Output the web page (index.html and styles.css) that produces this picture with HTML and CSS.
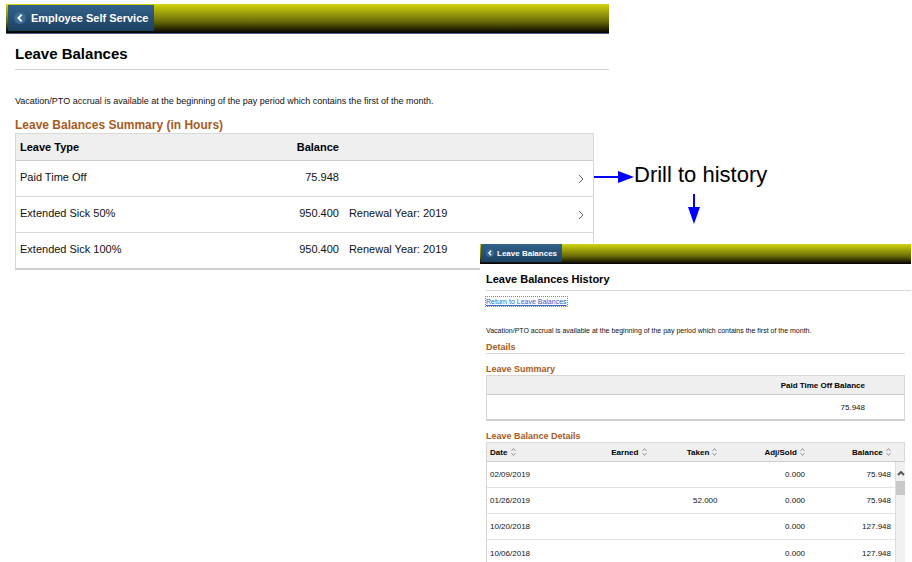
FILE: index.html
```
<!DOCTYPE html>
<html lang="en">
<head>
  <meta charset="UTF-8" />
  <meta name="viewport" content="width=device-width, initial-scale=1.0" />
  <title>Leave Balances</title>
  <link rel="stylesheet" href="styles.css">
</head>
<body>

  <div class="stage">

    <!-- Leave Balances -->
    <main class="summary">
      <header class="toolbar">
        <button type="button" class="back">
          <svg class="back-icon" viewBox="0 0 12 12" aria-hidden="true"><circle cx="6" cy="6" r="6" /><path d="M7.6 2.6 4.4 6l3.2 3.4" /></svg>
          Employee Self Service
        </button>
      </header>
      <h1>Leave Balances</h1>
      <p class="notice">Vacation/PTO accrual is available at the beginning of the pay period which contains the first of the month.</p>
      <h2>Leave Balances Summary (in Hours)</h2>
      <table class="grid balances">
        <thead>
          <tr>
            <th class="type">Leave Type</th>
            <th class="num">Balance</th>
            <th class="renewal"></th>
            <th class="open"></th>
          </tr>
        </thead>
        <tbody>
          <tr>
            <td>Paid Time Off</td>
            <td class="num">75.948</td>
            <td></td>
            <td><button type="button" class="drill" aria-label="Paid Time Off history"><svg viewBox="0 0 6 10"><path d="M1 1l4 4-4 4" /></svg></button></td>
          </tr>
          <tr>
            <td>Extended Sick 50%</td>
            <td class="num">950.400</td>
            <td>Renewal Year: 2019</td>
            <td><button type="button" class="drill" aria-label="Extended Sick 50% history"><svg viewBox="0 0 6 10"><path d="M1 1l4 4-4 4" /></svg></button></td>
          </tr>
          <tr>
            <td>Extended Sick 100%</td>
            <td class="num">950.400</td>
            <td>Renewal Year: 2019</td>
            <td></td>
          </tr>
        </tbody>
      </table>
    </main>

    <!-- Callout -->
    <div class="callout">
      <svg class="arrow-right" viewBox="0 0 40 12" aria-hidden="true"><path class="line" d="M0 6h26" /><path class="head" d="M24 0l16 6-16 6z" /></svg>
      <span>Drill to history</span>
      <svg class="arrow-down" viewBox="0 0 12 30" aria-hidden="true"><path class="line" d="M6 0v16" /><path class="head" d="M0 13l6 17 6-17z" /></svg>
    </div>

    <!-- Leave Balances History -->
    <section class="history">
      <header class="toolbar">
        <button type="button" class="back">
          <svg class="back-icon" viewBox="0 0 12 12" aria-hidden="true"><circle cx="6" cy="6" r="6" /><path d="M7.6 2.6 4.4 6l3.2 3.4" /></svg>
          Leave Balances
        </button>
      </header>
      <h1>Leave Balances History</h1>
      <div class="content">
        <a class="return" href="#">Return to Leave Balances</a>
        <p class="notice">Vacation/PTO accrual is available at the beginning of the pay period which contains the first of the month.</p>
        <h2 class="ruled">Details</h2>

        <h2>Leave Summary</h2>
        <table class="grid pto">
          <thead>
            <tr><th class="num">Paid Time Off Balance</th></tr>
          </thead>
          <tbody>
            <tr><td class="num">75.948</td></tr>
          </tbody>
        </table>

        <h2>Leave Balance Details</h2>
        <div class="scroller">
          <table class="grid details">
            <thead>
              <tr>
                <th class="date">Date <svg class="sort" viewBox="0 0 5 8"><path d="M.5 3l2-2.500 2 2.500M.5 5l2 2.500 2-2.500" /></svg></th>
                <th class="num earned">Earned <svg class="sort" viewBox="0 0 5 8"><path d="M.5 3l2-2.500 2 2.500M.5 5l2 2.500 2-2.500" /></svg></th>
                <th class="num taken">Taken <svg class="sort" viewBox="0 0 5 8"><path d="M.5 3l2-2.500 2 2.500M.5 5l2 2.500 2-2.500" /></svg></th>
                <th class="num sold">Adj/Sold <svg class="sort" viewBox="0 0 5 8"><path d="M.5 3l2-2.500 2 2.500M.5 5l2 2.500 2-2.500" /></svg></th>
                <th class="num balance">Balance <svg class="sort" viewBox="0 0 5 8"><path d="M.5 3l2-2.500 2 2.500M.5 5l2 2.500 2-2.500" /></svg></th>
              </tr>
            </thead>
            <tbody>
              <tr><td>02/09/2019</td><td></td><td></td><td class="num">0.000</td><td class="num">75.948</td></tr>
              <tr><td>01/26/2019</td><td></td><td class="num">52.000</td><td class="num">0.000</td><td class="num">75.948</td></tr>
              <tr><td>10/20/2018</td><td></td><td></td><td class="num">0.000</td><td class="num">127.948</td></tr>
              <tr><td>10/06/2018</td><td></td><td></td><td class="num">0.000</td><td class="num">127.948</td></tr>
            </tbody>
          </table>
          <div class="scrollbar">
            <svg viewBox="0 0 8 5" aria-hidden="true"><path d="M1 4l3-3 3 3" /></svg>
            <div class="thumb"></div>
          </div>
        </div>
      </div>
    </section>

  </div>

</body>
</html>
```
FILE: styles.css
```
* {
  box-sizing: border-box;
}

body {
  margin: 0;
  font-family: "Liberation Sans", Arial, sans-serif;
  font-size: 11px;
  color: #111;
  background: #fff;
}

h1, h2, p {
  margin: 0;
}

.stage {
  position: relative;
  min-height: 100vh;
  overflow: hidden;
}

/* Toolbar */
.toolbar {
  display: flex;
  align-items: flex-start;
  background: linear-gradient(#d2d40f, #6b6c08 60%, #000);
}
.back {
  display: flex;
  align-items: center;
  margin: 0;
  border: 0;
  font-family: inherit;
  font-weight: bold;
  color: #fff;
  background: linear-gradient(#33628a, #1d4163);
  cursor: pointer;
}
.back-icon circle {
  fill: #3a6b96;
}
.back-icon path {
  fill: none;
  stroke: #fff;
  stroke-width: 2;
}

/* Tables */
.grid {
  width: 100%;
  border-collapse: separate;
  border-spacing: 0;
  table-layout: fixed;
  border: 1px solid #d8d8d8;
  border-bottom: 2px solid #d0d0d0;
  background: #fff;
}
.grid th {
  padding: 0 4px;
  text-align: left;
  color: #000;
  background: #efefef;
  border-bottom: 1px solid #ccc;
}
.grid td {
  padding: 0 4px;
  border-bottom: 1px solid #d8d8d8;
}
.grid tr:last-child td {
  border-bottom: 0;
}
.grid .num {
  text-align: right;
}

h2 {
  color: #a85a1c;
}

/* Leave Balances */
.summary {
  width: 67%;
  padding: 4px 2px 0 6px;
}
.summary .toolbar {
  height: 30px;
  padding: 1px 2px;
  border-bottom: 1px solid #4d5f86;
}
.summary .back {
  height: 26px;
  gap: 5px;
  padding: 0 6px;
  font-size: 11px;
}
.summary .back-icon {
  width: 12px;
  height: 12px;
}
.summary h1 {
  margin-left: 9px;
  padding: 11px 0 6px;
  font-size: 15px;
  line-height: 18px;
  color: #000;
  border-bottom: 1px solid #d4d4d4;
}
.summary .notice {
  margin: 25px 0 0 9px;
  font-size: 9px;
  line-height: 12px;
}
.summary h2 {
  margin: 10px 0 0 9px;
  font-size: 12px;
  line-height: 16px;
}
.balances {
  width: auto;
  min-width: calc(100% - 24px);
  margin-left: 9px;
}
.balances th {
  height: 27px;
}
.balances td {
  height: 36px;
  padding-bottom: 4px;
}
.balances tr:last-child td {
  height: 35px;
}
.balances .num {
  padding-right: 6px;
}
.balances .type {
  width: 47%;
}
.balances th.num {
  width: 10%;
}
.balances .open {
  width: 6%;
}
.drill {
  display: block;
  margin: 5px 5px 0 auto;
  padding: 0;
  border: 0;
  background: none;
  cursor: pointer;
}
.drill svg {
  display: block;
  width: 6px;
  height: 10px;
  fill: none;
  stroke: #666;
}

/* Callout */
.callout {
  position: absolute;
  top: 162px;
  left: 594px;
  display: grid;
  grid-template-columns: 40px auto;
  align-items: center;
  row-gap: 6px;
  font-size: 22px;
  line-height: 26px;
  color: #000;
}
.callout svg .line {
  fill: none;
  stroke: #00f;
  stroke-width: 2;
}
.callout svg .head {
  fill: #00f;
}
.arrow-right {
  width: 40px;
  height: 12px;
  margin-top: 4px;
}
.arrow-down {
  grid-column: 2;
  width: 12px;
  height: 30px;
  margin-left: 54px;
}

/* History */
.history {
  position: absolute;
  top: 244px;
  right: 1px;
  bottom: 0;
  left: 480px;
  overflow: hidden;
  font-size: 8px;
  background: #fff;
}
.history .toolbar {
  height: 20px;
  padding-left: 1px;
}
.history .back {
  height: 18px;
  gap: 3px;
  padding: 0 5px;
  font-size: 8px;
}
.history .back-icon {
  width: 8px;
  height: 8px;
}
.history h1 {
  margin-left: 6px;
  padding: 8px 0 4px;
  font-size: 11px;
  line-height: 14px;
  color: #000;
  border-bottom: 1px solid #d8d8d8;
}
.content {
  padding: 6px 6px 0;
}
.return {
  display: table;
  font-size: 7px;
  line-height: 9px;
  color: #2a62c9;
  outline: 1px dotted #888;
}
.history .notice {
  margin-top: 20px;
  font-size: 7px;
  line-height: 10px;
}
.history h2 {
  margin-top: 9px;
  font-size: 9px;
  line-height: 12px;
}
.history h2.ruled {
  margin-top: 5px;
  border-bottom: 1px solid #d8d8d8;
}
.pto th {
  height: 19px;
}
.pto td {
  height: 24px;
}
.pto th.num,
.pto td.num {
  padding-right: 39px;
}
.scroller {
  position: relative;
}
.details {
  border-bottom: 0;
}
.details th,
.details td {
  padding: 0 3px;
}
.details th {
  height: 19px;
}
.details td {
  height: 26px;
  border-bottom-color: #e2e2e2;
}
.details .date {
  width: 19%;
}
.details .earned {
  width: 20%;
}
.details .taken {
  width: 17%;
}
.details .sold {
  width: 21%;
}
.details .balance {
  width: 23%;
}
.details th.balance,
.details td:last-child {
  padding-right: 13px;
}
.sort {
  width: 5px;
  height: 8px;
  margin-left: 1px;
  vertical-align: -1px;
  fill: none;
  stroke: #999;
}

/* Scrollbar lies over the rows, below the header */
.scrollbar {
  position: absolute;
  top: 20px;
  right: 0;
  bottom: 0;
  width: 10px;
  background: #f0f0f0;
  border-left: 1px solid #ddd;
}
.scrollbar svg {
  display: block;
  width: 8px;
  height: 5px;
  margin: 9px auto 5px;
  fill: none;
  stroke: #555;
  stroke-width: 2;
}
.thumb {
  height: 14px;
  background: #c8c8c8;
}
```
